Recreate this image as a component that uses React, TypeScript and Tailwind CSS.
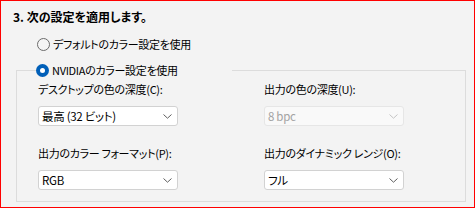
import React from "react";

const font = "[font-family:'Noto_Sans_CJK_JP',sans-serif] [font-feature-settings:'palt']";

function Chevron({ disabled }: { disabled?: boolean }) {
  return (
    <svg width="9" height="5" viewBox="0 0 9 5" className="shrink-0">
      <path
        d="M0.5 0.5 L4.5 4.2 L8.5 0.5"
        fill="none"
        stroke={disabled ? "#c4c4c4" : "#5f5f5f"}
        strokeWidth="1"
      />
    </svg>
  );
}

function Select({ value, disabled }: { value: string; disabled?: boolean }) {
  return (
    <div
      className={
        disabled
          ? "flex h-[20px] w-[140px] items-center justify-between rounded-[3px] border border-[#e6e6e6] bg-[#f9f9f9] pl-[3px] pr-[5px] text-[11.5px] leading-[16px] tracking-[-0.3px] text-[#a3a3a3]"
          : "flex h-[20px] w-[140px] items-center justify-between rounded-[3px] border border-[#d2d2d2] bg-white pl-[3px] pr-[5px] text-[11.5px] leading-[16px] tracking-[-0.3px] text-black"
      }
    >
      <span className="whitespace-nowrap">{value}</span>
      <Chevron disabled={disabled} />
    </div>
  );
}

function Field({ label, value, disabled }: { label: string; value: string; disabled?: boolean }) {
  return (
    <div className="flex flex-col">
      <div className="h-[16px] whitespace-nowrap text-[11px] leading-[16px] tracking-[-0.3px] text-black">{label}</div>
      <div className="mt-[9px]">
        <Select value={value} disabled={disabled} />
      </div>
    </div>
  );
}

export default function App() {
  return (
    <div className={`h-[208px] w-[475px] border border-[#ff0000] bg-[#f3f3f3] pt-[8px] ${font}`}>
      <div className="ml-[12px] h-[16px] text-[12px] font-bold leading-[16px] text-black">
        3. 次の設定を適用します。
      </div>
      <div className="ml-[36px] mt-[12px] flex h-[14px] items-center">
        <span className="box-border h-[13px] w-[13px] rounded-full border border-[#6b6b6b] bg-[#f5f5f5]" />
        <span className="ml-[3px] whitespace-nowrap text-[11px] leading-[14px] tracking-[-0.3px] text-black">デフォルトのカラー設定を使用</span>
      </div>
      <fieldset className="ml-[15px] mt-[12px] w-[450px] border border-[#dcdcdc] pb-[11px] pt-[4px]">
        <legend className="ml-[19px] flex h-[14px] w-[196px] items-center">
          <span className="flex h-[13px] w-[13px] items-center justify-center rounded-full bg-[#005fb8]">
            <span className="h-[5px] w-[5px] rounded-full bg-white" />
          </span>
          <span className="ml-[3px] whitespace-nowrap text-[11px] leading-[14px] tracking-[-0.3px] text-black">NVIDIAのカラー設定を使用</span>
        </legend>
        <div className="ml-[21px] grid grid-cols-[226px_140px] gap-y-[19px]">
          <Field label="デスクトップの色の深度(C):" value="最高 (32 ビット)" />
          <Field label="出力の色の深度(U):" value="8 bpc" disabled />
          <Field label="出力のカラー フォーマット(P):" value="RGB" />
          <Field label="出力のダイナミック レンジ(O):" value="フル" />
        </div>
      </fieldset>
    </div>
  );
}
